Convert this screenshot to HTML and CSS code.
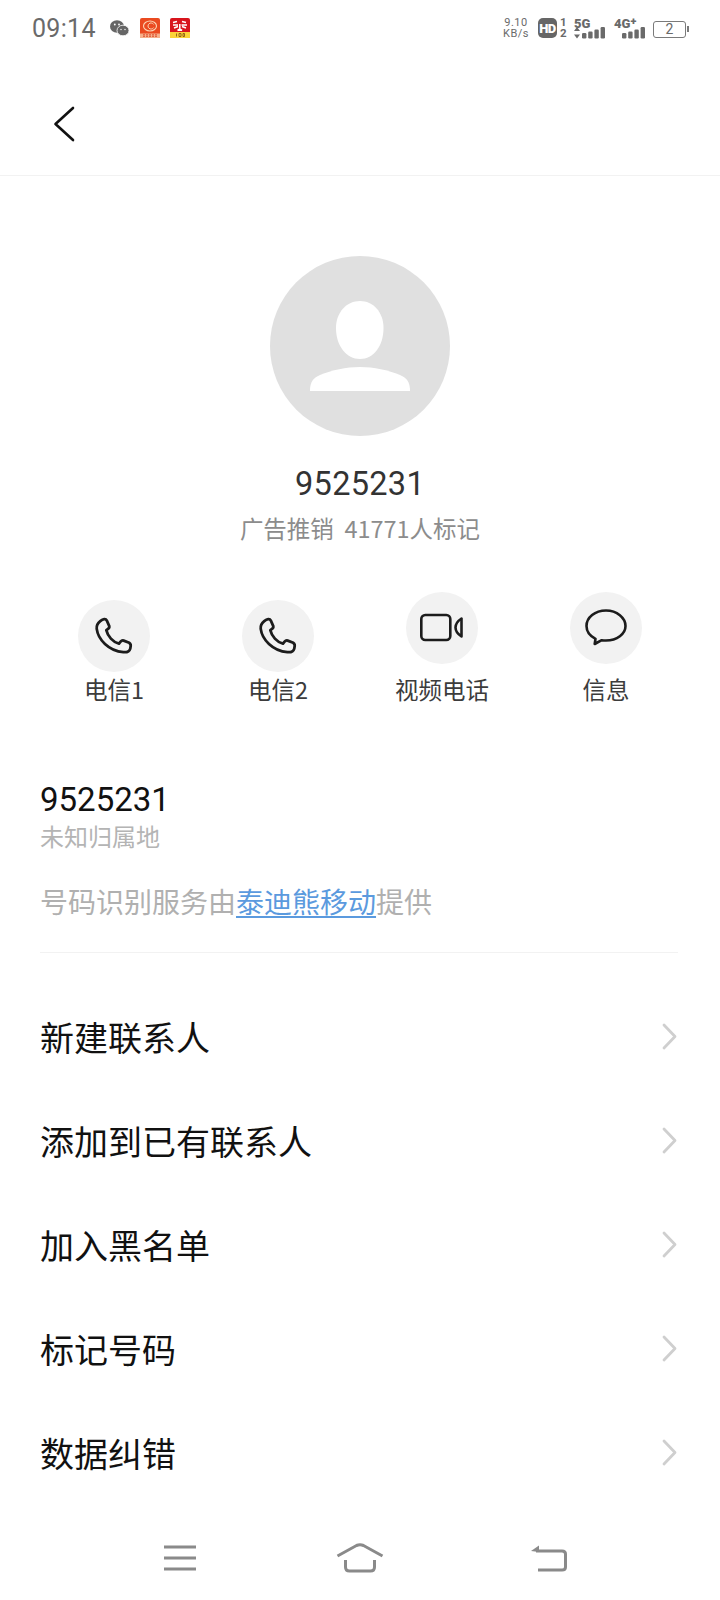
FILE: index.html
```html
<!DOCTYPE html>
<html lang="zh">
<head>
<meta charset="utf-8">
<title>9525231</title>
<link rel="stylesheet" href="styles.css">
</head>
<body>
<div class="screen">
  <div class="status">
    <div class="status-left">
      <span class="time">09:14</span>
      <svg class="ic-wechat" viewBox="0 0 19 16"><ellipse cx="7" cy="6.500" rx="7" ry="6.200" fill="#666"/><ellipse cx="13" cy="10.500" rx="6" ry="5.300" fill="#666" stroke="#fff" stroke-width=".8"/><circle cx="4.800" cy="4.500" r=".9" fill="#fff"/><circle cx="9" cy="4.500" r=".9" fill="#fff"/><circle cx="11" cy="9.500" r=".7" fill="#fff"/><circle cx="15" cy="9.500" r=".7" fill="#fff"/></svg>
      <svg class="ic-app" viewBox="0 0 20 20"><rect width="20" height="20" rx="2" fill="#ea4a20"/><rect y="15.500" width="20" height="4.500" fill="#f6b08a"/><path d="M3 16.800h14M3 18.300h14" stroke="#d8381a" stroke-width=".8" stroke-dasharray="2 1"/><ellipse cx="10" cy="8" rx="6.500" ry="5" fill="none" stroke="#fbd5b5" stroke-width="1.100"/><path d="M13.500 6.300a3 3 0 1 0 0 3.400" fill="none" stroke="#fbd5b5" stroke-width="1"/></svg>
      <svg class="ic-app" viewBox="0 0 20 20"><rect width="20" height="20" rx="2" fill="#d8141c"/><rect y="14" width="20" height="6" fill="#fbd338"/><path d="M3 4.500l4-1M3 7h5M4 10l4-1.500M12 3.500l4 1M11.500 7h5.500M12 8.500l4 1.500M9.800 6v6M7.500 12.500l2.300-1.500 2.300 1.500" stroke="#fff" stroke-width="1.500" fill="none"/><path d="M6.500 15.500v3M9 15.500h2v3h-2zM13 15.500h1.500v3H13z" stroke="#7a4a10" stroke-width=".8" fill="none"/></svg>
    </div>
    <div class="status-right">
      <div class="speed"><span>9.10</span><span>KB/s</span></div>
      <div class="hd"><span class="hd-box">HD</span><span class="hd-nums"><span>1</span><span>2</span></span></div>
      <div class="net net-5g">
        <span class="net-label">5G</span>
        <svg class="bars-5g" viewBox="0 0 32 12"><path d="M3 0l3 4H0zM0 7.500h6l-3 4z" fill="#6a6a6a"/><rect x="8" y="6" width="4.400" height="5.500" rx="1.200" fill="#6a6a6a"/><rect x="14.200" y="4.500" width="4.400" height="7" rx="1.200" fill="#6a6a6a"/><rect x="20.400" y="2.500" width="4.400" height="9" rx="1.200" fill="#6a6a6a"/><rect x="26.600" y="0" width="4.400" height="11.500" rx="1.200" fill="#6a6a6a"/></svg>
      </div>
      <div class="net net-4g">
        <span class="net-label">4G<sup>+</sup></span>
        <svg class="bars-4g" viewBox="0 0 24 12"><rect x="0" y="6" width="4.400" height="5.500" rx="1.200" fill="#6a6a6a"/><rect x="6.200" y="4.500" width="4.400" height="7" rx="1.200" fill="#6a6a6a"/><rect x="12.400" y="2.500" width="4.400" height="9" rx="1.200" fill="#6a6a6a"/><rect x="18.600" y="0" width="4.400" height="11.500" rx="1.200" fill="#6a6a6a"/></svg>
      </div>
      <div class="battery"><span class="battery-body">2</span><span class="battery-tip"></span></div>
    </div>
  </div>

  <header class="topbar">
    <svg class="back" viewBox="0 0 22 36"><path d="M20 2L2.500 18 20 34" fill="none" stroke="#111" stroke-width="2.600" stroke-linecap="round" stroke-linejoin="round"/></svg>
  </header>

  <section class="profile">
    <div class="avatar">
      <svg viewBox="0 0 180 180" width="180" height="180"><path d="M90 45c13 0 23.500 11 23.500 27 0 18-10 31-23.500 31S66 90 66 72c0-16 11-27 24-27z" fill="#fff"/><path d="M40 135c0-9 3-13 10-16 12-5 26-8 40-8s28 3 40 8c7 3 10 7 10 16z" fill="#fff"/></svg>
    </div>
    <div class="name">9525231</div>
    <div class="tag">广告推销&nbsp;&nbsp;41771人标记</div>
  </section>

  <section class="actions">
    <div class="action action-low">
      <div class="action-icon"><svg viewBox="0 0 40 40" width="44" height="44"><path d="M7.500 6.500c2.500-2 5-2.500 6 -.5l2.200 5c.4 1.200-.2 2.300-2.700 3.700 1.300 5.500 6 11 11.500 12.300 1.500-2.300 2.800-3.300 4.300-2.800l5 2c1.600.9 1.700 2.900 1 5.200-.8 2.800-3 3.600-6.300 3.300C15 33.500 5.500 23 4.300 13.500c-.4-3 1.300-5.500 3.200-7z" fill="none" stroke="#1c1c1c" stroke-width="2.500" stroke-linejoin="round"/></svg></div>
      <span class="action-label">电信1</span>
    </div>
    <div class="action action-low">
      <div class="action-icon"><svg viewBox="0 0 40 40" width="44" height="44"><path d="M7.500 6.500c2.500-2 5-2.500 6 -.5l2.200 5c.4 1.200-.2 2.300-2.700 3.700 1.300 5.500 6 11 11.500 12.300 1.500-2.300 2.800-3.300 4.300-2.800l5 2c1.600.9 1.700 2.900 1 5.200-.8 2.800-3 3.600-6.300 3.300C15 33.500 5.500 23 4.300 13.500c-.4-3 1.300-5.500 3.200-7z" fill="none" stroke="#1c1c1c" stroke-width="2.500" stroke-linejoin="round"/></svg></div>
      <span class="action-label">电信2</span>
    </div>
    <div class="action">
      <div class="action-icon"><svg viewBox="0 0 44 30" width="44" height="30"><rect x="1.300" y="2" width="29" height="25" rx="4" fill="none" stroke="#1c1c1c" stroke-width="2.600"/><path d="M35.500 14.500c0-3 1.500-6 6-9v18c-4.500-3-6-6-6-9z" fill="none" stroke="#1c1c1c" stroke-width="2.600" stroke-linejoin="round"/></svg></div>
      <span class="action-label">视频电话</span>
    </div>
    <div class="action">
      <div class="action-icon"><svg viewBox="0 0 44 40" width="44" height="40"><path d="M22 2.500C11 2.500 2.500 9.500 2.500 18c0 5.500 3.500 10 9 12.800l-.8 5.200 7-3.800c1.400.2 2.900.3 4.300.3 11 0 19.500-6.600 19.500-14.500S33 2.500 22 2.500z" fill="none" stroke="#1c1c1c" stroke-width="2.600" stroke-linejoin="round"/></svg></div>
      <span class="action-label">信息</span>
    </div>
  </section>

  <section class="info">
    <div class="info-number">9525231</div>
    <div class="info-place">未知归属地</div>
    <div class="info-source">号码识别服务由<a class="link">泰迪熊移动</a>提供</div>
  </section>

  <ul class="menu">
    <li class="menu-row"><span>新建联系人</span><svg class="chev" viewBox="0 0 15 27"><path d="M2 2l11 11.500L2 25" fill="none" stroke="#cfcfcf" stroke-width="2.800" stroke-linecap="round" stroke-linejoin="round"/></svg></li>
    <li class="menu-row"><span>添加到已有联系人</span><svg class="chev" viewBox="0 0 15 27"><path d="M2 2l11 11.500L2 25" fill="none" stroke="#cfcfcf" stroke-width="2.800" stroke-linecap="round" stroke-linejoin="round"/></svg></li>
    <li class="menu-row"><span>加入黑名单</span><svg class="chev" viewBox="0 0 15 27"><path d="M2 2l11 11.500L2 25" fill="none" stroke="#cfcfcf" stroke-width="2.800" stroke-linecap="round" stroke-linejoin="round"/></svg></li>
    <li class="menu-row"><span>标记号码</span><svg class="chev" viewBox="0 0 15 27"><path d="M2 2l11 11.500L2 25" fill="none" stroke="#cfcfcf" stroke-width="2.800" stroke-linecap="round" stroke-linejoin="round"/></svg></li>
    <li class="menu-row"><span>数据纠错</span><svg class="chev" viewBox="0 0 15 27"><path d="M2 2l11 11.500L2 25" fill="none" stroke="#cfcfcf" stroke-width="2.800" stroke-linecap="round" stroke-linejoin="round"/></svg></li>
  </ul>

  <nav class="navbar">
    <svg class="nav-ic" viewBox="0 0 34 26" width="34" height="26"><path d="M1 2h32M1 13h32M1 24h32" stroke="#8a8a8a" stroke-width="3" fill="none"/></svg>
    <svg class="nav-ic" viewBox="0 0 48 30" width="48" height="30"><path d="M1.500 13L20.500 2.500c2.300-1 4.700-1 7 0L46.500 13M9.500 17v7c0 2.500 1.500 4 4 4h21c2.500 0 4-1.500 4-4v-7" stroke="#8a8a8a" stroke-width="3" fill="none"/></svg>
    <svg class="nav-ic" viewBox="0 0 36 28" width="36" height="28"><path d="M5 7h26c2 0 3.500 1 3.500 3v13c0 2-1.500 3-3.500 3H7" stroke="#8a8a8a" stroke-width="3" fill="none"/><path d="M0 7L8 1.500V8z" fill="#8a8a8a"/></svg>
  </nav>
</div>
</body>
</html>
```

FILE: styles.css
```css
* { box-sizing: border-box; margin: 0; padding: 0; }
html, body { background: #fff; }
body { font-family: "Noto Sans CJK SC", "Noto Sans", sans-serif; }
.screen { width: 720px; height: 1600px; display: flex; flex-direction: column; overflow: hidden; position: relative; }

.status { height: 56px; display: flex; justify-content: space-between; align-items: center; padding: 0 31px 0 32px; color: #6a6a6a; font-family: "Roboto", "Noto Sans", sans-serif; }
.status-left { display: flex; align-items: center; }
.time { font-size: 25px; letter-spacing: .3px; line-height: 1; width: 78px; }
.ic-wechat { width: 19px; height: 16px; margin-right: 11px; }
.ic-app { width: 20px; height: 20px; margin-right: 10px; }
.status-right { display: flex; align-items: center; }
.speed { display: flex; flex-direction: column; align-items: center; font-size: 11px; line-height: 11px; letter-spacing: .5px; width: 26px; margin-right: 9px; }
.hd { display: flex; align-items: center; width: 29px; margin-right: 7px; }
.hd-box { background: #666; color: #fff; font-size: 13px; font-weight: 900; border-radius: 5px; width: 19px; height: 20px; display: flex; align-items: center; justify-content: center; letter-spacing: -.5px; }
.hd-nums { display: flex; flex-direction: column; font-size: 11.500px; font-weight: 700; line-height: 11.500px; margin-left: 3px; }
.net { display: flex; flex-direction: column; }
.net-label { font-size: 13px; font-weight: 900; line-height: 13px; }
.net-label sup { font-size: 11px; line-height: 0; vertical-align: 3px; }
.net-5g { width: 32px; margin-right: 8px; }
.bars-5g { width: 32px; height: 12px; margin-top: -3px; }
.net-4g { width: 32px; margin-right: 7px; align-items: flex-end; }
.net-4g .net-label { align-self: flex-start; }
.bars-4g { width: 24px; height: 12px; margin-top: -3px; }
.battery { display: flex; align-items: center; margin-top: 2px; }
.battery-body { width: 33px; height: 17px; border: 1.500px solid #7a7a7a; border-radius: 3px; font-size: 14px; line-height: 14px; text-align: center; }
.battery-tip { width: 2px; height: 6px; background: #7a7a7a; margin-left: 1px; }

.topbar { height: 120px; border-bottom: 1px solid #f2f2f2; display: flex; align-items: center; padding: 17px 0 0 53px; }
.back { width: 22px; height: 36px; }

.profile { display: flex; flex-direction: column; align-items: center; padding-top: 80px; }
.avatar { width: 180px; height: 180px; border-radius: 50%; background: #e0e0e0; }
.name { font-size: 32.500px; line-height: 40px; margin-top: 28px; color: #333; font-family: "Roboto", sans-serif; letter-spacing: .3px; }
.tag { font-size: 23.500px; line-height: 32px; margin-top: 8px; color: #8c8c8c; }

.actions { display: grid; grid-template-columns: repeat(4, 164px); justify-content: start; padding: 48px 0 0 32px; }
.action { display: flex; flex-direction: column; align-items: center; }
.action-icon { width: 72px; height: 72px; border-radius: 50%; background: #f2f2f2; display: flex; align-items: center; justify-content: center; margin-bottom: 9px; }
.action-low { padding-top: 8px; }
.action-low .action-icon { margin-bottom: 1px; }
.action-label { font-size: 23.500px; line-height: 32px; color: #3c3c3c; }

.info { margin: 75px 42px 0 40px; padding-bottom: 31px; border-bottom: 1px solid #f2f2f2; }
.info-number { font-size: 33px; line-height: 40px; color: #111; font-family: "Roboto", sans-serif; }
.info-place { font-size: 24px; line-height: 34px; margin-top: -1px; color: #b4b4b4; }
.info-source { font-size: 28px; line-height: 40px; margin-top: 28px; color: #b0b0b0; }
.link { color: #5b9ade; text-decoration: underline; text-underline-offset: 3px; text-decoration-thickness: 1.500px; }

.menu { list-style: none; margin-top: 31px; }
.menu-row { height: 104px; display: flex; align-items: center; justify-content: space-between; padding: 0 43px 0 40px; font-size: 34px; color: #111; }
.chev { width: 15px; height: 27px; }

.navbar { position: absolute; left: 0; right: 0; bottom: 0; height: 80px; display: flex; align-items: center; padding-bottom: 4px; }
.nav-ic:nth-child(1) { margin-left: 163px; }
.nav-ic:nth-child(2) { margin-left: 139px; }
.nav-ic:nth-child(3) { margin-left: 147px; }
```
